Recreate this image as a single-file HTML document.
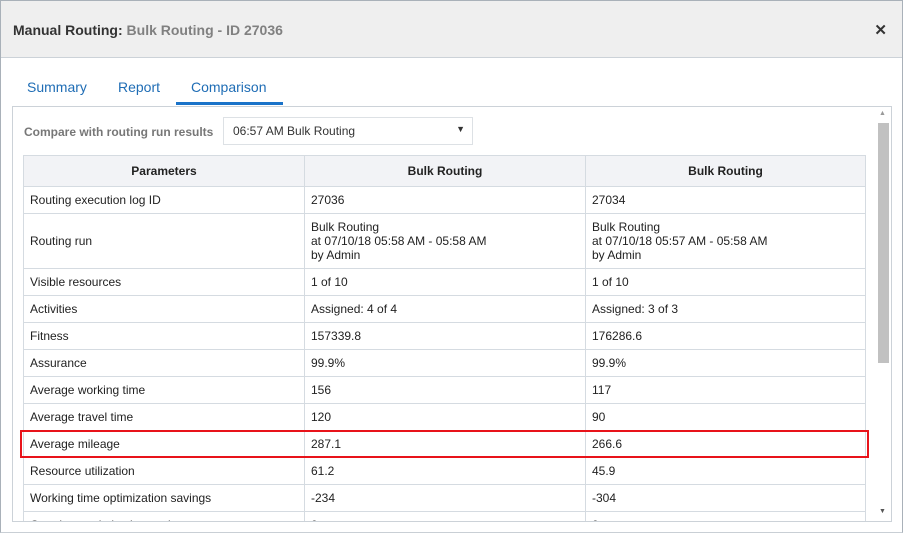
<!DOCTYPE html><html><head><style>
*{box-sizing:border-box}body{margin:0;width:903px;height:533px;overflow:hidden;font-family:"Liberation Sans",sans-serif;background:#fff;position:relative}
.frame{position:absolute;left:0;top:0;width:903px;height:533px;border:1px solid #a9b1b9;border-bottom-color:#c9cfd5}
.hdr{position:absolute;left:1px;top:1px;right:1px;height:57px;background:#efefef;border-bottom:1px solid #ccd2d8}
.title{position:absolute;left:12px;top:21px;font-size:14px;font-weight:bold;color:#333}
.title span{color:#808080}
.x{position:absolute;right:15px;top:20px;font-size:15px;font-weight:bold;color:#333}
.tab{position:absolute;top:79px;font-size:14px;color:#1f6db5}
.ul{position:absolute;left:176px;top:102px;width:107px;height:3px;background:#1a73c9}
.box{position:absolute;left:12px;top:106px;width:880px;height:416px;border:1px solid #ccd2d8;overflow:hidden}
.lbl{position:absolute;left:11px;top:18px;font-size:12px;font-weight:bold;color:#777}
.dd{position:absolute;left:210px;top:10px;width:250px;height:28px;border:1px solid #dde1e5;font-size:12px;color:#333;padding:6px 0 0 9px}
.dd b{position:absolute;right:7px;top:6px;font-size:9px}
table{position:absolute;left:10px;top:48px;width:843px;border-collapse:collapse;font-size:12px;color:#222}
td,th{border:1px solid #d5dbe1;padding:0 6px;height:27px;vertical-align:middle;text-align:left;line-height:14px}
th{text-align:center;height:31px;background:#f2f3f6;font-weight:bold}
.sb{position:absolute;left:863px;top:0;width:16px;height:414px;background:#fff}
.th{position:absolute;left:865px;top:16px;width:11px;height:240px;background:#c1c1c1}
.red{position:absolute;left:20px;top:430px;width:849px;height:28px;border:2px solid #e8131a}
</style></head><body>
<div class="frame"></div>
<div class="hdr"><div class="title">Manual Routing: <span>Bulk Routing - ID 27036</span></div><div class="x">✕</div></div>
<div class="tab" style="left:27px">Summary</div><div class="tab" style="left:118px">Report</div><div class="tab" style="left:191px">Comparison</div><div class="ul"></div>
<div class="box">
<div class="lbl">Compare with routing run results</div>
<div class="dd">06:57 AM Bulk Routing<b>▼</b></div>
<table><colgroup><col style="width:281px"><col style="width:281px"><col></colgroup>
<tr><th>Parameters</th><th>Bulk Routing</th><th>Bulk Routing</th></tr>
<tr><td>Routing execution log ID</td><td>27036</td><td>27034</td></tr>
<tr><td style="height:55px">Routing run</td><td>Bulk Routing<br>at 07/10/18 05:58 AM - 05:58 AM<br>by Admin</td><td>Bulk Routing<br>at 07/10/18 05:57 AM - 05:58 AM<br>by Admin</td></tr>
<tr><td>Visible resources</td><td>1 of 10</td><td>1 of 10</td></tr>
<tr><td>Activities</td><td>Assigned: 4 of 4</td><td>Assigned: 3 of 3</td></tr>
<tr><td>Fitness</td><td>157339.8</td><td>176286.6</td></tr>
<tr><td>Assurance</td><td>99.9%</td><td>99.9%</td></tr>
<tr><td>Average working time</td><td>156</td><td>117</td></tr>
<tr><td>Average travel time</td><td>120</td><td>90</td></tr>
<tr><td>Average mileage</td><td>287.1</td><td>266.6</td></tr>
<tr><td>Resource utilization</td><td>61.2</td><td>45.9</td></tr>
<tr><td>Working time optimization savings</td><td>-234</td><td>-304</td></tr>
<tr><td>Overtime optimization savings</td><td>0</td><td>0</td></tr>
</table>
<div class="sb"></div><div class="th"></div>
<div style="position:absolute;left:866px;top:3px;font-size:7px;color:#999">▲</div>
<div style="position:absolute;left:866px;top:401px;font-size:7px;color:#555">▼</div>
</div>
<div class="red"></div>
</body></html>
